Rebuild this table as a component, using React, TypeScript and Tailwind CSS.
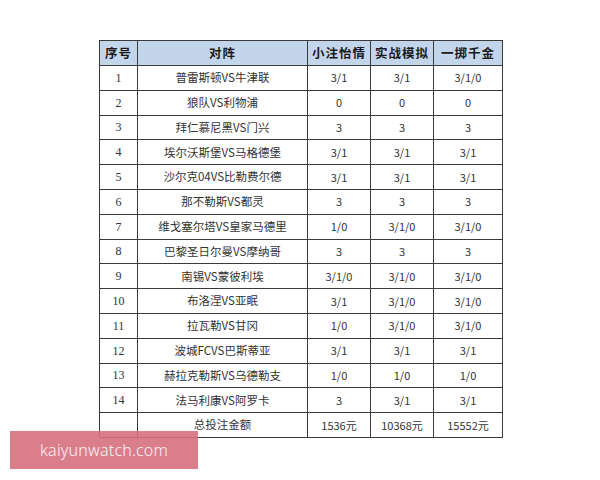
const rows: [string, string, string, string, string][] = [
  ['1', '普雷斯顿VS牛津联', '3/1', '3/1', '3/1/0'],
  ['2', '狼队VS利物浦', '0', '0', '0'],
  ['3', '拜仁慕尼黑VS门兴', '3', '3', '3'],
  ['4', '埃尔沃斯堡VS马格德堡', '3/1', '3/1', '3/1'],
  ['5', '沙尔克04VS比勒费尔德', '3/1', '3/1', '3/1'],
  ['6', '那不勒斯VS都灵', '3', '3', '3'],
  ['7', '维戈塞尔塔VS皇家马德里', '1/0', '3/1/0', '3/1/0'],
  ['8', '巴黎圣日尔曼VS摩纳哥', '3', '3', '3'],
  ['9', '南锡VS蒙彼利埃', '3/1/0', '3/1/0', '3/1/0'],
  ['10', '布洛涅VS亚眠', '3/1', '3/1/0', '3/1/0'],
  ['11', '拉瓦勒VS甘冈', '1/0', '3/1/0', '3/1/0'],
  ['12', '波城FCVS巴斯蒂亚', '3/1', '3/1', '3/1'],
  ['13', '赫拉克勒斯VS乌德勒支', '1/0', '1/0', '1/0'],
  ['14', '法马利康VS阿罗卡', '3', '3/1', '3/1'],
  ['', '总投注金额', '1536元', '10368元', '15552元'],
]

const headers = ['序号', '对阵', '小注怡情', '实战模拟', '一掷千金']
const widths = ['w-[38px]', 'w-[170px]', 'w-[63px]', 'w-[63px]', 'w-[69px]']

export default function App() {
  return (
    <div className="relative w-[600px] h-[480px] bg-white" style={{ fontFamily: '"Noto Sans CJK SC", "Liberation Sans", sans-serif' }}>
      <div className="pt-[40px] pl-[99px]">
        <table className="border-collapse table-fixed w-[404px] text-[#222]">
          <thead>
            <tr className="h-[25px] bg-[#c3d5ea]">
              {headers.map((h, i) => (
                <th key={h} className={`${widths[i]} border border-[#3a3a3a] p-0 text-[12.5px] font-bold tracking-[1px] text-[#1a1a1a] leading-none`}>
                  {h}
                </th>
              ))}
            </tr>
          </thead>
          <tbody>
            {rows.map((r, idx) => (
              <tr key={idx} className="h-[24.8px]">
                {r.map((c, i) => (
                  <td
                    key={i}
                    className={`border border-[#3a3a3a] p-0 text-center leading-none text-[#333] ${i === 0 ? 'text-[12px] font-["Liberation_Serif",serif]' : i === 1 ? 'text-[11.5px]' : 'text-[11px]'}`}
                  >
                    {c}
                  </td>
                ))}
              </tr>
            ))}
          </tbody>
        </table>
      </div>
      <div className="absolute left-[10px] top-[431px] w-[188px] h-[38px] bg-[#d6707f]/90 flex items-center pl-[30px]">
        <span className="text-white/90 text-[16px] tracking-[0.2px]" style={{ fontFamily: '"Noto Sans", sans-serif', fontWeight: 300 }}>kaiyunwatch.com</span>
      </div>
    </div>
  )
}
